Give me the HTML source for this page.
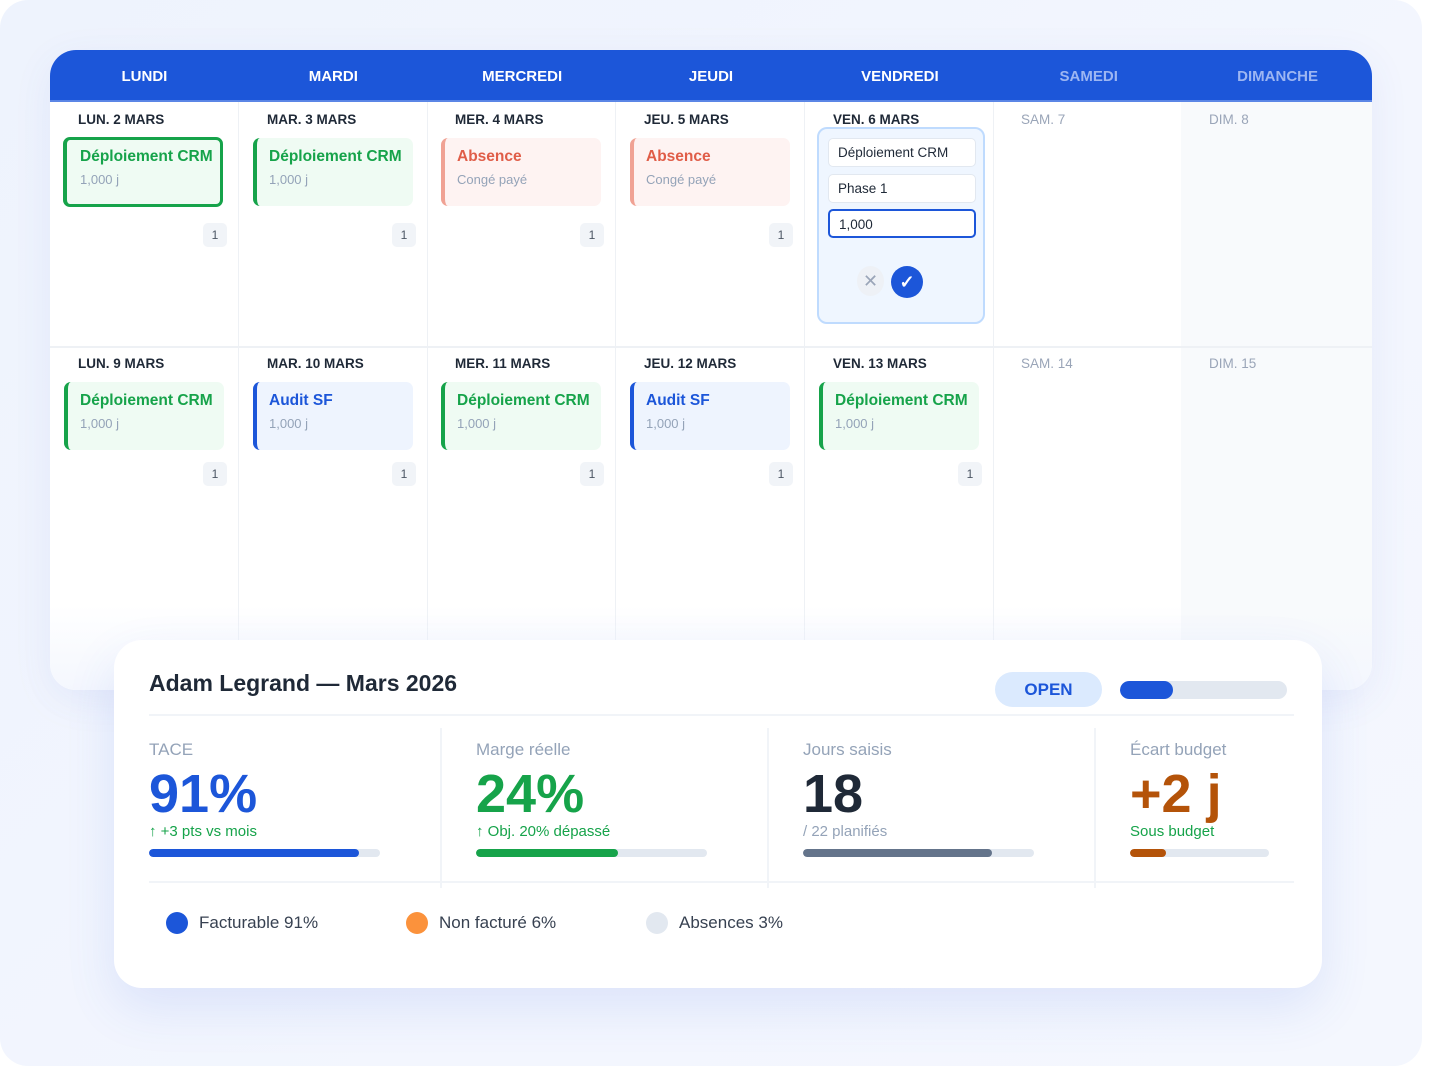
<!DOCTYPE html>
<html><head><meta charset="utf-8"><style>
*{box-sizing:border-box;margin:0;padding:0}
body{width:1440px;height:1084px;background:#fff;font-family:"Liberation Sans",Arial,sans-serif;position:relative;overflow:hidden}
.bg{position:absolute;left:0;top:0;width:1422px;height:1066px;border-radius:28px;background:linear-gradient(135deg,#eef3fd,#f3f6fe 60%,#f4f7fe)}
.cal{position:absolute;left:50px;top:50px;width:1322px;height:640px;background:#fff;border-radius:26px;overflow:hidden;box-shadow:0 10px 40px rgba(60,90,200,.08)}
.hdr{height:52px;background:#1c56d9;display:flex;border-bottom:2px solid #5b86e6}
.hdr div{flex:1;text-align:center;color:#fff;font-weight:bold;font-size:15px;line-height:54px}
.hdr div.we{color:#9db6f2}
.col{position:absolute;top:52px;width:189px;height:588px;border-right:1px solid #eef1f5}
.rowline{position:absolute;left:0;top:296px;width:1322px;height:2px;background:#eef1f5}
.d{position:absolute;left:28px;font-size:13.5px;font-weight:bold;color:#1f2937;white-space:nowrap}
.d.we{font-weight:normal;color:#9aa5b8}
.card{position:absolute;left:14px;width:160px;height:68px;border-radius:7px;padding:10px 0 0 12px;white-space:nowrap}
.card b{display:block;font-size:15.5px}
.card span{display:block;font-size:13px;color:#94a3b8;margin-top:6px}
.g{background:#effbf3;border-left:4px solid #16a34a}.g b{color:#16a34a}
.r{background:#fef3f2;border-left:4px solid #f0a294}.r b{color:#e05d48}
.bl{background:#eef4fe;border-left:4px solid #1c56d9}.bl b{color:#1c56d9}
.badge{position:absolute;left:153px;width:24px;height:24px;background:#f1f4f8;border-radius:5px;font-size:12px;color:#4b5563;text-align:center;line-height:24px}
.fade{position:absolute;left:0;top:555px;width:1322px;height:85px;background:linear-gradient(rgba(255,255,255,0),#f4f7fe)}
.sum{position:absolute;left:114px;top:640px;width:1208px;height:348px;background:#fff;border-radius:28px;box-shadow:0 20px 50px rgba(60,100,220,.12)}
.lab{position:absolute;font-size:17px;color:#94a3b8}
.big{position:absolute;font-size:54px;font-weight:bold}
.sub{position:absolute;font-size:15px}
.bar{position:absolute;height:8px;border-radius:4px;background:#e2e8f0;overflow:hidden}
.bar i{display:block;height:8px;border-radius:4px}
.vl{position:absolute;top:88px;width:2px;height:160px;background:#f1f4f8}
.leg{position:absolute;top:272px;font-size:17px;color:#374151;display:flex;align-items:center}
.leg i{width:22px;height:22px;border-radius:50%;margin-right:11px;display:inline-block}
.inp{position:absolute;left:9px;width:148px;height:29px;background:#fff;border:1.5px solid #e2e8f0;border-radius:5px;font-size:13.5px;color:#1f2937;padding:6px 0 0 9px}
</style></head><body>
<div class="bg"></div>
<div class="cal">
<div class="hdr"><div>LUNDI</div><div>MARDI</div><div>MERCREDI</div><div>JEUDI</div><div>VENDREDI</div><div class="we">SAMEDI</div><div class="we">DIMANCHE</div></div>
<div class="col" style="left:0"></div>
<div class="col" style="left:189px"></div>
<div class="col" style="left:377px"></div>
<div class="col" style="left:566px"></div>
<div class="col" style="left:755px"></div>
<div class="col" style="left:943px"></div>
<div class="col" style="left:1131px;width:191px;background:#f8fafc;border-right:none"></div>
<div class="rowline"></div>

<div style="position:absolute;left:0;top:52px">
 <div class="d" style="top:10px">LUN. 2 MARS</div>
 <div class="card g" style="left:13px;height:70px;border:3px solid #16a34a;border-left:4px solid #16a34a;padding-left:13px;padding-top:8px;top:35px"><b>Déploiement CRM</b><span>1,000 j</span></div>
 <div class="badge" style="top:121px">1</div>
</div>
<div style="position:absolute;left:189px;top:52px">
 <div class="d" style="top:10px">MAR. 3 MARS</div>
 <div class="card g" style="top:36px"><b>Déploiement CRM</b><span>1,000 j</span></div>
 <div class="badge" style="top:121px">1</div>
</div>
<div style="position:absolute;left:377px;top:52px">
 <div class="d" style="top:10px">MER. 4 MARS</div>
 <div class="card r" style="top:36px"><b>Absence</b><span>Congé payé</span></div>
 <div class="badge" style="top:121px">1</div>
</div>
<div style="position:absolute;left:566px;top:52px">
 <div class="d" style="top:10px">JEU. 5 MARS</div>
 <div class="card r" style="top:36px"><b>Absence</b><span>Congé payé</span></div>
 <div class="badge" style="top:121px">1</div>
</div>
<div style="position:absolute;left:755px;top:52px">
 <div class="d" style="top:10px">VEN. 6 MARS</div>
 <div style="position:absolute;left:12px;top:25px;width:168px;height:197px;background:#eff6ff;border:2px solid #bfdbfe;border-radius:10px">
  <div class="inp" style="top:9px">Déploiement CRM</div>
  <div class="inp" style="top:45px">Phase 1</div>
  <div class="inp" style="top:80px;border:2px solid #1c56d9">1,000</div>
  <div style="position:absolute;left:38px;top:137px;width:27px;height:30px;border-radius:50%;background:#eef1f6;color:#9aa5b8;text-align:center;line-height:30px;font-size:18px">✕</div>
  <div style="position:absolute;left:72px;top:137px;width:32px;height:32px;border-radius:50%;background:#1c56d9;color:#fff;text-align:center;line-height:32px;font-size:18px;font-weight:bold">✓</div>
 </div>
</div>
<div style="position:absolute;left:943px;top:52px"><div class="d we" style="top:10px">SAM. 7</div></div>
<div style="position:absolute;left:1131px;top:52px"><div class="d we" style="top:10px">DIM. 8</div></div>

<div style="position:absolute;left:0;top:296px">
 <div class="d" style="top:10px">LUN. 9 MARS</div>
 <div class="card g" style="top:36px"><b>Déploiement CRM</b><span>1,000 j</span></div>
 <div class="badge" style="top:116px">1</div>
</div>
<div style="position:absolute;left:189px;top:296px">
 <div class="d" style="top:10px">MAR. 10 MARS</div>
 <div class="card bl" style="top:36px"><b>Audit SF</b><span>1,000 j</span></div>
 <div class="badge" style="top:116px">1</div>
</div>
<div style="position:absolute;left:377px;top:296px">
 <div class="d" style="top:10px">MER. 11 MARS</div>
 <div class="card g" style="top:36px"><b>Déploiement CRM</b><span>1,000 j</span></div>
 <div class="badge" style="top:116px">1</div>
</div>
<div style="position:absolute;left:566px;top:296px">
 <div class="d" style="top:10px">JEU. 12 MARS</div>
 <div class="card bl" style="top:36px"><b>Audit SF</b><span>1,000 j</span></div>
 <div class="badge" style="top:116px">1</div>
</div>
<div style="position:absolute;left:755px;top:296px">
 <div class="d" style="top:10px">VEN. 13 MARS</div>
 <div class="card g" style="top:36px"><b>Déploiement CRM</b><span>1,000 j</span></div>
 <div class="badge" style="top:116px">1</div>
</div>
<div style="position:absolute;left:943px;top:296px"><div class="d we" style="top:10px">SAM. 14</div></div>
<div style="position:absolute;left:1131px;top:296px"><div class="d we" style="top:10px">DIM. 15</div></div>
<div class="fade"></div>
</div>

<div class="sum">
 <div style="position:absolute;left:35px;top:30px;font-size:23px;font-weight:bold;color:#1f2937">Adam Legrand — Mars 2026</div>
 <div style="position:absolute;left:881px;top:32px;width:107px;height:35px;border-radius:18px;background:#dbeafe;color:#1c56d9;font-weight:bold;font-size:17px;text-align:center;line-height:35px">OPEN</div>
 <div class="bar" style="left:1006px;top:41px;width:167px;height:18px;border-radius:9px"><i style="width:53px;height:18px;border-radius:9px;background:#1c56d9"></i></div>
 <div style="position:absolute;left:35px;top:74px;width:1145px;height:2px;background:#f1f4f8"></div>
 <div style="position:absolute;left:35px;top:241px;width:1145px;height:2px;background:#f1f4f8"></div>
 <div class="vl" style="left:326px"></div><div class="vl" style="left:653px"></div><div class="vl" style="left:980px"></div>

 <div class="lab" style="left:35px;top:100px">TACE</div>
 <div class="big" style="left:35px;top:123px;color:#1c56d9">91%</div>
 <div class="sub" style="left:35px;top:183px;color:#16a34a">↑ +3 pts vs mois</div>
 <div class="bar" style="left:35px;top:209px;width:231px"><i style="width:210px;background:#1c56d9"></i></div>

 <div class="lab" style="left:362px;top:100px">Marge réelle</div>
 <div class="big" style="left:362px;top:123px;color:#16a34a">24%</div>
 <div class="sub" style="left:362px;top:183px;color:#16a34a">↑ Obj. 20% dépassé</div>
 <div class="bar" style="left:362px;top:209px;width:231px"><i style="width:142px;background:#16a34a"></i></div>

 <div class="lab" style="left:689px;top:100px">Jours saisis</div>
 <div class="big" style="left:689px;top:123px;color:#1f2937">18</div>
 <div class="sub" style="left:689px;top:183px;color:#94a3b8">/ 22 planifiés</div>
 <div class="bar" style="left:689px;top:209px;width:231px"><i style="width:189px;background:#64748b"></i></div>

 <div class="lab" style="left:1016px;top:100px">Écart budget</div>
 <div class="big" style="left:1016px;top:123px;color:#b45309">+2 j</div>
 <div class="sub" style="left:1016px;top:183px;color:#16a34a">Sous budget</div>
 <div class="bar" style="left:1016px;top:209px;width:139px"><i style="width:36px;background:#b45309"></i></div>

 <div class="leg" style="left:52px"><i style="background:#1c56d9"></i>Facturable 91%</div>
 <div class="leg" style="left:292px"><i style="background:#fb923c"></i>Non facturé 6%</div>
 <div class="leg" style="left:532px"><i style="background:#e2e8f0"></i>Absences 3%</div>
</div>
</body></html>
